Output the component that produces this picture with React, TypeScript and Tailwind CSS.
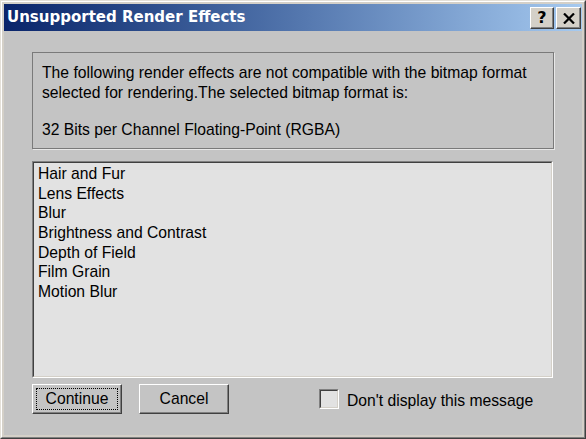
import React from "react";

const items = [
  "Hair and Fur",
  "Lens Effects",
  "Blur",
  "Brightness and Contrast",
  "Depth of Field",
  "Film Grain",
  "Motion Blur",
];

function RaisedButton({ label, focused }: { label: string; focused?: boolean }) {
  return (
    <div className="w-[90px] h-[30px] bg-[#c4c4c4] border-t border-l border-t-white border-l-white border-b border-r border-b-[#404040] border-r-[#404040] shadow-[inset_-1px_-1px_0_#808080] flex items-center justify-center p-[3px]">
      <div
        className={
          "w-full h-full flex items-center justify-center " +
          (focused ? "border border-dotted border-black" : "")
        }
      >
        <span className="text-[15.7px] leading-none text-black">{label}</span>
      </div>
    </div>
  );
}

export default function App() {
  return (
    <div
      className="w-[586px] h-[439px] overflow-hidden bg-[#d4d0c8] border-t border-l border-t-[#e4e0d8] border-l-[#e4e0d8] border-b border-r border-b-[#404040] border-r-[#404040]"
      style={{ fontFamily: '"Liberation Sans", Arial, sans-serif' }}
    >
      <div className="w-full h-full border-t border-l border-t-white border-l-white border-b border-r border-b-[#808080] border-r-[#808080] p-[2px] flex flex-col">
        {/* Title bar */}
        <div className="h-[27px] shrink-0 flex items-center bg-gradient-to-r from-[#0a246a] to-[#a6caf0] pl-[3px] pr-[1px]">
          <span
            className="text-white font-bold text-[15px] leading-none flex-1"
            style={{ fontFamily: '"DejaVu Sans", Verdana, sans-serif' }}
          >
            Unsupported Render Effects
          </span>
          <div className="flex gap-[2px] mt-[1px]">
            <div className="w-[24px] h-[22px] bg-[#d4d0c8] border-t border-l border-t-white border-l-white border-b border-r border-b-[#404040] border-r-[#404040] shadow-[inset_-1px_-1px_0_#808080] flex items-center justify-center">
              <span
                className="font-bold text-[16px] leading-none text-black"
                style={{ fontFamily: '"DejaVu Sans", Verdana, sans-serif' }}
              >
                ?
              </span>
            </div>
            <div className="w-[25px] h-[22px] bg-[#d4d0c8] border-t border-l border-t-white border-l-white border-b border-r border-b-[#404040] border-r-[#404040] shadow-[inset_-1px_-1px_0_#808080] flex items-center justify-center">
              <svg width="12" height="11" viewBox="0 0 12 11">
                <path d="M1 0.5 L11 10.5 M11 0.5 L1 10.5" stroke="black" strokeWidth="2.2" />
              </svg>
            </div>
          </div>
        </div>

        {/* Body */}
        <div className="flex-1 bg-[#c4c4c4] px-[28px] pt-[21px] flex flex-col">
          {/* Info box */}
          <div className="h-[97px] border border-[#7a7a7a] shadow-[1px_1px_0_#e8e8e8] pl-[9px] pt-[10px] text-[15.7px] leading-[20px] text-black">
            <div>The following render effects are not compatible with the bitmap format</div>
            <div>selected for rendering.The selected bitmap format is:</div>
            <div className="mt-[17px]">32 Bits per Channel Floating-Point (RGBA)</div>
          </div>

          {/* List */}
          <div className="mt-[12px] h-[217px] w-[521px] border-t border-l border-t-[#808080] border-l-[#808080] border-b border-r border-b-white border-r-white">
            <div className="w-full h-full border-t border-l border-t-[#404040] border-l-[#404040] border-b border-r border-b-[#d4d0c8] border-r-[#d4d0c8] bg-[#e2e2e2] pl-[4px] pt-[1px] text-[15.7px] leading-[19.67px] text-black">
              {items.map((it) => (
                <div key={it}>{it}</div>
              ))}
            </div>
          </div>

          {/* Bottom row */}
          <div className="mt-[6px] flex items-center">
            <RaisedButton label="Continue" focused />
            <div className="ml-[17px]">
              <RaisedButton label="Cancel" />
            </div>
            <div className="ml-[90px] flex items-center">
              <div className="w-[20px] h-[20px] border-t border-l border-t-[#808080] border-l-[#808080] border-b border-r border-b-white border-r-white">
                <div className="w-full h-full border-t border-l border-t-[#404040] border-l-[#404040] border-b border-r border-b-[#d4d0c8] border-r-[#d4d0c8] bg-[#e2e2e2]" />
              </div>
              <span className="ml-[8px] mt-[3px] text-[15.7px] leading-none text-black">
                Don't display this message
              </span>
            </div>
          </div>
        </div>
      </div>
    </div>
  );
}
